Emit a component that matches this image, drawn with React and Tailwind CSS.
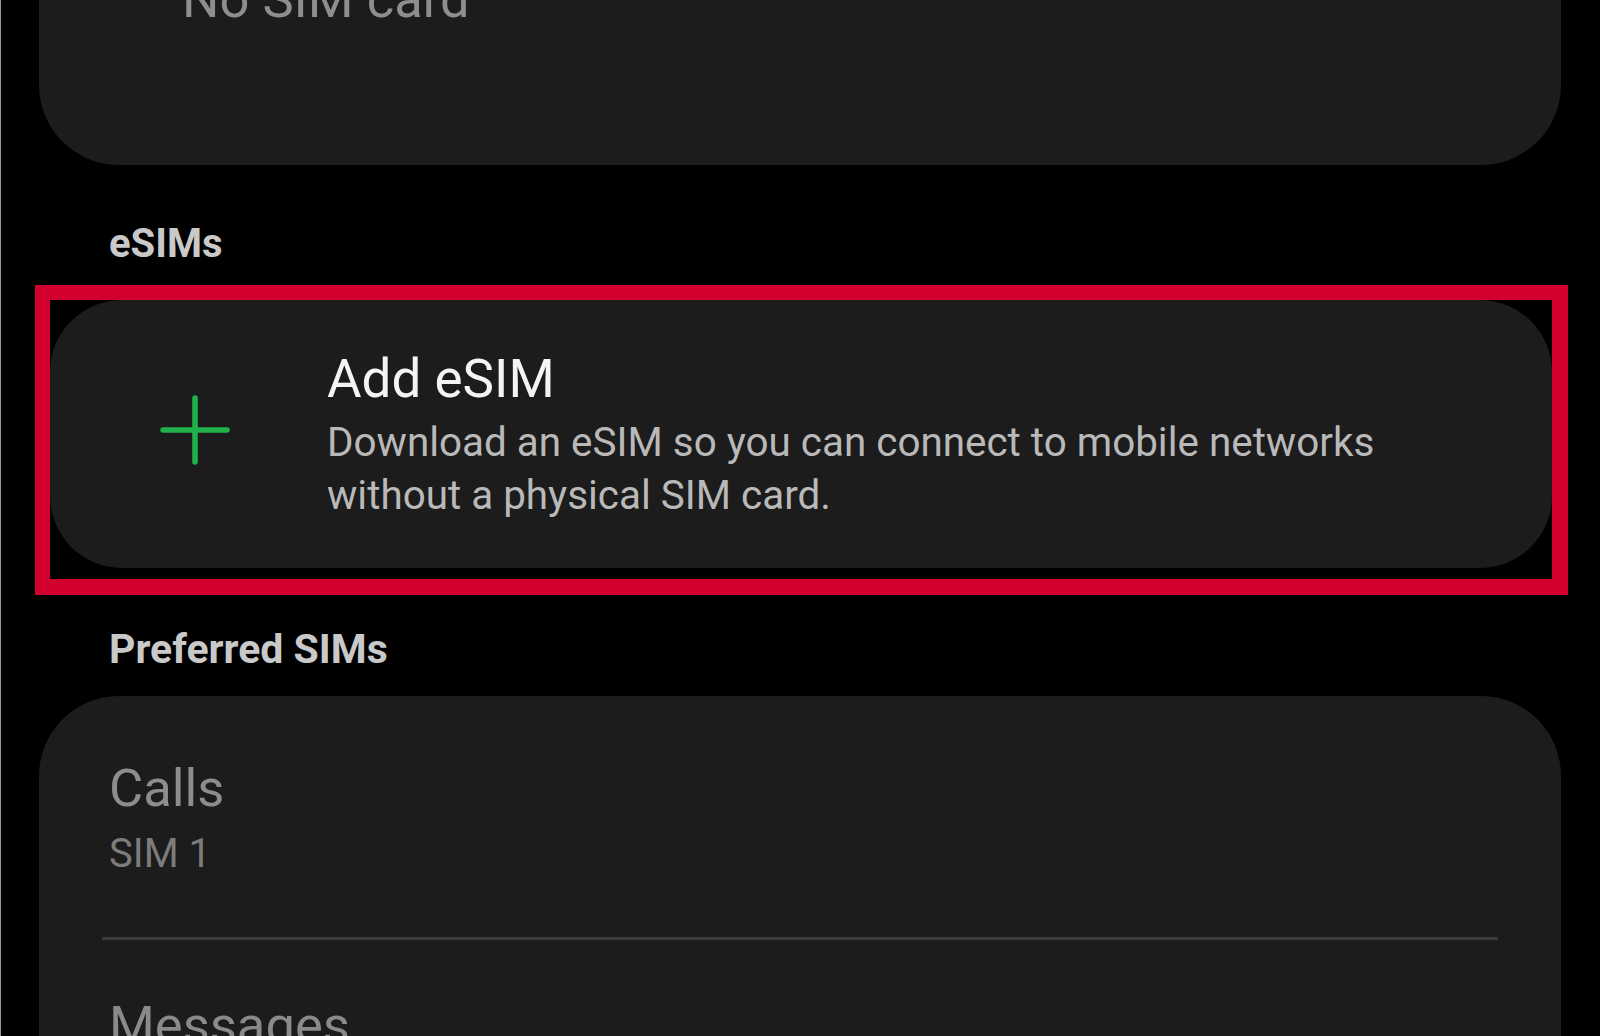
import React from "react";

export default function App() {
  return (
    <div
      className="w-[1600px] h-[1036px] overflow-hidden bg-black flex flex-col relative"
      style={{ fontFamily: "Roboto, 'Noto Sans', sans-serif" }}
    >
      <div className="absolute left-0 top-0 bottom-0 w-px bg-[#9a9a9a]" />

      {/* Top card (partially off-screen) */}
      <div className="shrink-0 ml-[39px] w-[1522px] h-[300px] -mt-[135px] bg-[#1c1c1c] rounded-[80px] pt-[102px] pl-[143px]">
        <div className="text-[52.5px] leading-[64px] text-[#8e8e8e]">No SIM card</div>
      </div>

      {/* eSIMs header */}
      <div className="shrink-0 mt-[55px] ml-[109px] text-[40px] leading-[48px] font-bold text-[#c9c9c9]">
        eSIMs
      </div>

      {/* Highlighted Add eSIM */}
      <div className="shrink-0 mt-[17px] ml-[35px] w-[1533px] h-[310px] border-[15px] border-r-[16px] border-b-[16px] border-[#d1002f]">
        <div className="h-[268px] bg-[#1c1c1c] rounded-[72px] flex items-center pl-[109px]">
          <div className="w-[72px] h-[72px] shrink-0 -mt-[8px]">
            <svg viewBox="0 0 72 72" className="w-[72px] h-[72px]">
              <path
                d="M36 4 V68 M4 36 H68"
                stroke="#1fb24a"
                strokeWidth="5.5"
                strokeLinecap="round"
                fill="none"
              />
            </svg>
          </div>
          <div className="ml-[96px] w-[1130px] flex flex-col gap-[5px]">
            <div className="text-[53px] leading-[64px] text-[#f4f4f4]">Add eSIM</div>
            <div className="text-[40.4px] leading-[53px] text-[#b9b9b9]">
              Download an eSIM so you can connect to mobile networks without a physical SIM card.
            </div>
          </div>
        </div>
      </div>

      {/* Preferred SIMs header */}
      <div className="shrink-0 mt-[30px] ml-[109px] text-[41px] leading-[48px] font-bold text-[#c9c9c9]">
        Preferred SIMs
      </div>

      {/* Bottom card */}
      <div className="shrink-0 mt-[23px] ml-[39px] w-[1522px] h-[500px] bg-[#1c1c1c] rounded-[80px] pt-[60px] flex flex-col">
        <div className="pl-[70px] flex flex-col gap-[7px]">
          <div className="text-[52.5px] leading-[64px] text-[#8d8d8d]">Calls</div>
          <div className="text-[40px] leading-[53px] text-[#7c7c7c]">SIM 1</div>
        </div>
        <div className="mt-[57px] mx-[63px] h-[3px] bg-[#3b3b3d]" />
        <div className="mt-[53px] pl-[70px] text-[52.5px] leading-[64px] text-[#8a8a8a]">Messages</div>
      </div>
    </div>
  );
}
